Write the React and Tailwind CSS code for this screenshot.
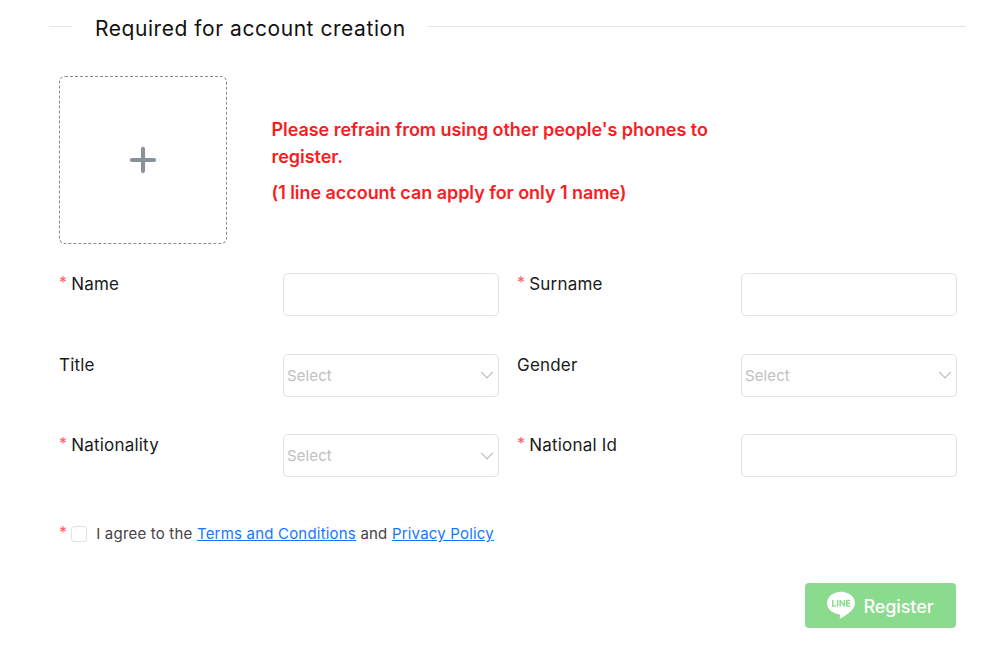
import { Plus, ChevronDown } from "lucide-react";
import { SiLine } from "react-icons/si";

const fields = [
  { label: "Name", required: true },
  { label: "Surname", required: true },
  { label: "Title", select: true },
  { label: "Gender", select: true },
  { label: "Nationality", required: true, select: true },
  { label: "National Id", required: true },
];

const Star = () => (
  <span className="mr-[4px] inline-block -translate-y-[2px] text-[16px] leading-none text-[#ff5a5f]">*</span>
);

const Field = ({ label, required, select }) => (
  <div className="flex h-[43px] items-start">
    <label className="w-[224px] shrink-0 pt-[1px] text-[17px] leading-[20px] tracking-[0.2px] text-[#1a1a1a]">
      {required && <Star />}
      {label}
    </label>
    <div className="flex h-[43px] w-[216px] items-center justify-between rounded-[5px] border border-[#dfe1e8] bg-white pl-[3px]">
      {select && (
        <>
          <span className="pt-[2px] text-[15px] tracking-[0.1px] text-[#bfbfbf]">Select</span>
          <ChevronDown size={22} strokeWidth={1.1} className="text-[#a8a8a8]" />
        </>
      )}
    </div>
  </div>
);

const App = () => {
  return (
    <div className="h-[654px] w-[1000px] overflow-hidden bg-white font-['Inter',sans-serif]">
      {/* Section heading */}
      <div className="flex items-start pl-[49px] pr-[34px] pt-[16px]">
        <div className="mt-[10px] h-px w-[23px] bg-[#e3e4ea]" />
        <h2 className="pl-[23px] pr-[22px] text-[21px] leading-[26px] tracking-[0.55px] text-[#111]">Required for account creation</h2>
        <div className="mt-[10px] h-px flex-1 bg-[#e3e4ea]" />
      </div>

      <div className="pl-[59px] pr-[43px]">
        <div className="mt-[34px] flex items-center">
          <div className="flex h-[168px] w-[168px] items-center justify-center rounded-md border border-dashed border-[#8a8a8a]">
            <Plus size={38} strokeWidth={2.6} className="text-[#8b929c]" />
          </div>
          <div className="ml-[44.5px] w-[470px] pt-[2px] text-[18px] font-semibold tracking-[-0.05px] text-[#f81d22]">
            <p className="leading-[27px]">Please refrain from using other people's phones to register.</p>
            <p className="mt-[9px] leading-[27px]">(1 line account can apply for only 1 name)</p>
          </div>
        </div>

        <div className="mt-[29px] grid grid-cols-[440px_440px] gap-x-[18px] gap-y-[37.5px]">
          {fields.map((f) => (
            <Field key={f.label} {...f} />
          ))}
        </div>

        <div className="mt-[46px] flex items-center text-[15px] tracking-[0.2px] text-[#444]">
          <Star />
          <span className="h-4 w-4 rounded-[3px] border border-[#dfe1e8] bg-white" />
          <span className="ml-[9px]">
            I agree to the <a className="text-[#1677ff] underline">Terms and Conditions</a> and{" "}
            <a className="text-[#1677ff] underline">Privacy Policy</a>
          </span>
        </div>

        <div className="mt-[37px] flex justify-end pr-[1px]">
          <button className="flex h-[45px] w-[151px] items-center justify-center gap-2 rounded-[4px] bg-[#8bdb8e] text-[18px] font-medium tracking-[-0.1px] text-white">
            <SiLine size={28} />
            <span className="pt-[2px]">Register</span>
          </button>
        </div>
      </div>
    </div>
  );
};

export default App;
